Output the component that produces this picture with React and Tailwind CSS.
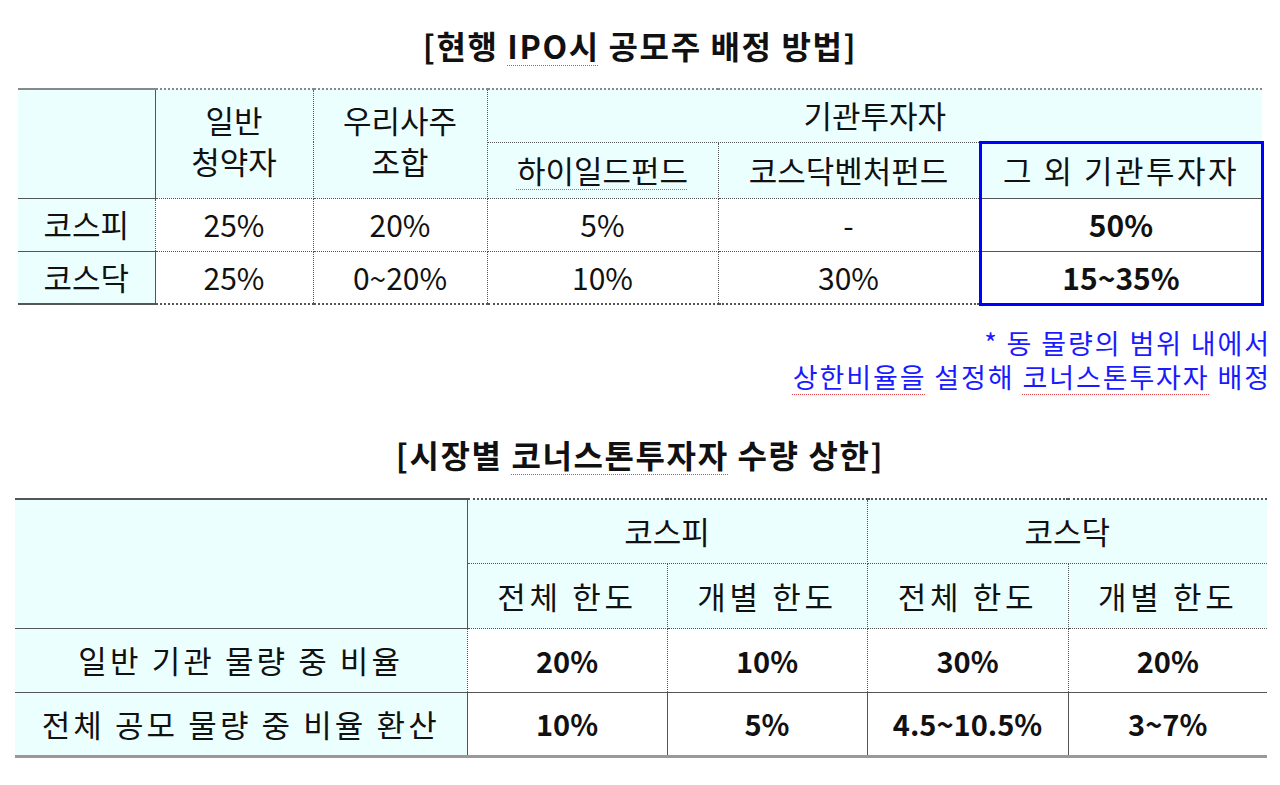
const font = { fontFamily: '"Noto Sans CJK KR", "Noto Sans", sans-serif' };

const hd = 'bg-[#ecffff] border border-dotted border-[#555] font-normal p-0 text-center align-middle text-[31px]';
const td = 'border border-dotted border-[#555] p-0 text-center align-middle';
const blueSide = 'border-l-[3px] border-r-[3px] border-l-[#0000ff] border-r-[#0000ff] border-solid';

function Squiggle({ children, color = 'decoration-[#e8484d]' }) {
  return (
    <span className={`underline decoration-dotted decoration-1 underline-offset-[6px] ${color}`}>{children}</span>
  );
}

function AllocationTable() {
  return (
    <table className="ml-[18px] w-[1244px] table-fixed border-collapse text-[30px] text-[#111]">
      <colgroup>
        <col className="w-[137px]" />
        <col className="w-[158px]" />
        <col className="w-[174px]" />
        <col className="w-[231px]" />
        <col className="w-[262px]" />
        <col className="w-[282px]" />
      </colgroup>
      <thead>
        <tr className="h-[53px]">
          <th rowSpan={2} className={`${hd} border-l-0 border-t-2 border-t-[#888] border-solid`} />
          <th rowSpan={2} className={`${hd} border-t-2 border-t-[#888] pb-[8px] leading-[41px]`}>일반<br />청약자</th>
          <th rowSpan={2} className={`${hd} border-t-2 border-t-[#888] pb-[8px] leading-[41px]`}>우리사주<br />조합</th>
          <th colSpan={3} className={`${hd} border-r-0 border-t-2 border-t-[#888]`}>기관투자자</th>
        </tr>
        <tr className="h-[56px]">
          <th className={hd}><Squiggle color="decoration-[#5b7fe0]">하이일드펀드</Squiggle></th>
          <th className={hd}>코스닥벤처펀드</th>
          <th className={`${hd} ${blueSide} border-t-[3px] border-t-[#0000ff]`}>
            <span className="tracking-[0.08em]">그 외 기관투자자</span>
          </th>
        </tr>
      </thead>
      <tbody>
        <tr className="h-[53px]">
          <td className={`${td} border-l-0 bg-[#ecffff] text-[31px]`}>코스피</td>
          <td className={td}>25%</td>
          <td className={td}>20%</td>
          <td className={td}>5%</td>
          <td className={td}>-</td>
          <td className={`${td} ${blueSide} font-bold`}>50%</td>
        </tr>
        <tr className="h-[53px]">
          <td className={`${td} border-l-0 bg-[#ecffff] text-[31px] border-b-2 border-b-[#555] border-solid`}>코스닥</td>
          <td className={`${td} border-b-2 border-b-[#555]`}>25%</td>
          <td className={`${td} border-b-2 border-b-[#555]`}>0~20%</td>
          <td className={`${td} border-b-2 border-b-[#555]`}>10%</td>
          <td className={`${td} border-b-2 border-b-[#555]`}>30%</td>
          <td className={`${td} ${blueSide} border-b-[3px] border-b-[#0000ff] font-bold`}>15~35%</td>
        </tr>
      </tbody>
    </table>
  );
}

function CapTable() {
  const rows = [
    ['일반 기관 물량 중 비율', '20%', '10%', '30%', '20%'],
    ['전체 공모 물량 중 비율 환산', '10%', '5%', '4.5~10.5%', '3~7%'],
  ];
  return (
    <table className="ml-[15px] w-[1252px] table-fixed border-collapse text-[29px] text-[#111]">
      <colgroup>
        <col className="w-[452px]" />
        <col className="w-[200px]" />
        <col className="w-[200px]" />
        <col className="w-[201px]" />
        <col className="w-[199px]" />
      </colgroup>
      <thead>
        <tr className="h-[65px]">
          <th rowSpan={2} className={`${hd} border-l-0 border-t-2 border-t-[#555] border-solid`} />
          <th colSpan={2} className={`${hd} border-t-2 border-t-[#555]`}>코스피</th>
          <th colSpan={2} className={`${hd} border-r-0 border-t-2 border-t-[#555]`}>코스닥</th>
        </tr>
        <tr className="h-[65px]">
          <th className={`${hd} tracking-[0.12em]`}>전체 한도</th>
          <th className={`${hd} tracking-[0.12em]`}>개별 한도</th>
          <th className={`${hd} tracking-[0.12em]`}>전체 한도</th>
          <th className={`${hd} border-r-0 tracking-[0.12em]`}>개별 한도</th>
        </tr>
      </thead>
      <tbody>
        {rows.map((r, i) => {
          const last = i === rows.length - 1;
          const bottom = last ? 'border-b-[3px] border-b-[#999] border-solid' : '';
          return (
            <tr key={r[0]} className="h-[64px]">
              <td className={`${td} ${bottom} border-l-0 bg-[#ecffff] text-[31px] tracking-[0.1em]`}>{r[0]}</td>
              {r.slice(1).map((v, j) => (
                <td key={j} className={`${td} ${bottom} font-bold ${j === 3 ? 'border-r-0' : ''}`}>{v}</td>
              ))}
            </tr>
          );
        })}
      </tbody>
    </table>
  );
}

export default function App() {
  return (
    <div className="min-h-screen w-[1280px] bg-white pt-[23px]" style={font}>
      <h1 className="text-center text-[32px] font-bold leading-[44px] tracking-[0.05em] text-[#111]">
        [현행 <Squiggle>IPO시</Squiggle> 공모주 배정 방법]
      </h1>
      <div className="mt-[21px]">
        <AllocationTable />
      </div>
      <div className="mt-[20px] pr-[9px] text-right text-[27px] leading-[34px] tracking-[0.07em] text-[#1a1aff]">
        <p>* 동 물량의 범위 내에서</p>
        <p><Squiggle>상한비율을</Squiggle> 설정해 <Squiggle>코너스톤투자자</Squiggle> 배정</p>
      </div>
      <h2 className="mt-[38px] text-center text-[32px] font-bold leading-[44px] tracking-[0.05em] text-[#111]">
        [시장별 <Squiggle>코너스톤투자자</Squiggle> 수량 상한]
      </h2>
      <div className="mt-[22px]">
        <CapTable />
      </div>
    </div>
  );
}
